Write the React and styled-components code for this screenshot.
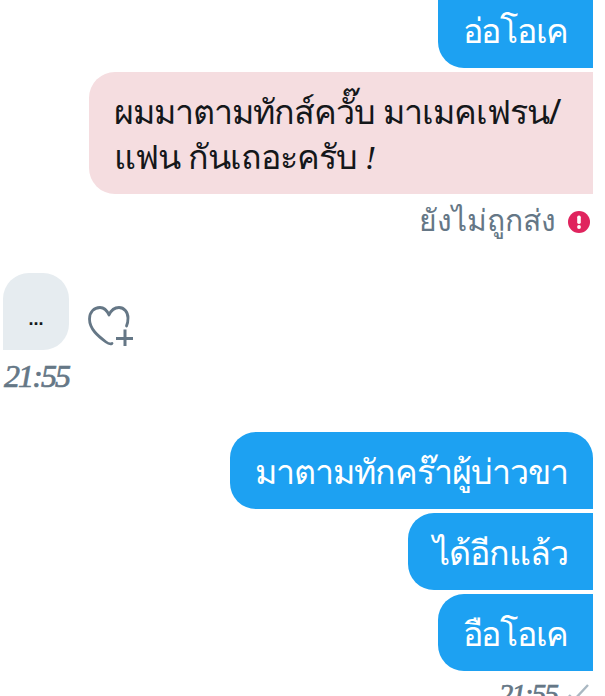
import React from 'react'
import styled, { createGlobalStyle } from 'styled-components'

const GlobalStyle = createGlobalStyle`
    html, body {
        margin: 0;
        padding: 0;
        background: #ffffff;
        height: 696px;
        overflow: hidden;
    }
`

const Chat = styled.div`
    width: 605px;
    height: 696px;
    overflow: hidden;
    box-sizing: border-box;
    padding: 0 12px 0 3px;
    font-family: "Noto Sans", Roboto, sans-serif;
    display: flex;
    flex-direction: column;
`

const Stack = styled.div`
    display: flex;
    flex-direction: column;
    align-items: flex-end;
    gap: 4px;
    margin-top: ${(p) => p.$top || 0}px;
`

const Bubble = styled.div`
    box-sizing: border-box;
    width: ${(p) => (p.$lines === 2 ? '504px' : 'auto')};
    height: ${(p) => (p.$lines === 2 ? 122 : 77)}px;
    padding: 17px 25px 15px;
    font-size: 34px;
    letter-spacing: ${(p) => (p.$tight ? -1.3 : -1)}px;
    line-height: 45px;
    white-space: pre-line;
    color: ${(p) => (p.$tone === 'blue' ? '#ffffff' : '#14171a')};
    background: ${(p) =>
        p.$tone === 'blue' ? '#1da1f2' : p.$tone === 'red' ? '#f5dde0' : '#e6ecf0'};
    border-radius: ${(p) => p.$radius || '26px'};
`

const Bang = styled.i`
    font-family: "Liberation Serif", serif;
`

const Status = styled.div`
    display: flex;
    align-items: center;
    justify-content: flex-end;
    gap: 12px;
    margin-top: 6px;
    padding-right: 3px;
    height: 39px;
    font-size: 30px;
    line-height: 39px;
    color: #657786;
`

const Alert = styled.svg`
    margin-top: 4px;
`

const Incoming = styled.div`
    display: flex;
    align-items: flex-start;
    gap: 19px;
    margin-top: 34px;
`

const Dots = styled(Bubble)`
    width: 66px;
    padding: 24px 0 0;
    text-align: center;
    font-family: "Liberation Sans", sans-serif;
    font-weight: 700;
    font-size: 18px;
    letter-spacing: 0;
    line-height: 45px;
    border-radius: 26px 26px 26px 0;
`

const Heart = styled.svg`
    margin-top: 33px;
`

const Time = styled.div`
    font-family: "Liberation Serif", serif;
    font-style: italic;
    font-weight: 400;
    font-size: ${(p) => p.$size || 32}px;
    letter-spacing: -1.9px;
    -webkit-text-stroke: 0.7px #657786;
    line-height: 40px;
    color: #657786;
    margin-top: ${(p) => p.$top || 0}px;
    margin-left: ${(p) => p.$left || 0}px;
`

const Sent = styled.div`
    display: flex;
    justify-content: flex-end;
    align-items: flex-start;
    gap: 11px;
    margin-top: 3px;
    padding-right: 3px;
`

const Tick = styled.svg`
    margin-top: 10px;
`

const App = () => {
    return (
        <>
            <GlobalStyle />
            <Chat>
                <Stack $top={-9}>
                    <Bubble $tone="blue" $tight $radius="0 0 0 26px">อ่อโอเค</Bubble>
                    <Bubble $tone="red" $lines={2} $radius="26px 0 0 26px">
                        {'ผมมาตามทักส์ควั๊บ มาเมคเฟรน/\nแฟน กันเถอะครับ '}<Bang>!</Bang>
                    </Bubble>
                </Stack>
                <Status>
                    ยังไม่ถูกส่ง
                    <Alert width="22" height="22" viewBox="0 0 22 22">
                        <circle cx="11" cy="11" r="11" fill="#e0245e" />
                        <rect x="9.2" y="4.5" width="3.6" height="8.5" rx="1.7" fill="#fff" />
                        <circle cx="11" cy="16" r="1.9" fill="#fff" />
                    </Alert>
                </Status>
                <Incoming>
                    <Dots $tone="grey">...</Dots>
                    <Heart width="46" height="42" viewBox="0 0 46 42" fill="none" stroke="#657786" strokeWidth="2.8" strokeLinecap="round" strokeLinejoin="round">
                        <path d="M24 37.5 C22 38.5 20 37.5 18 36 C10 30 1.5 23 1.5 13 C1.5 6 6 1.5 12 1.5 C16 1.5 19 4.5 21 9 C23 4.5 26 1.5 31 1.5 C36 1.5 40 6 40 12 C40 15 39.5 18 38.5 20" />
                        <path d="M37 23.5 V40 M28 32.5 H45" strokeLinecap="butt" strokeWidth="3" />
                    </Heart>
                </Incoming>
                <Time $top={6} $left={1}>21:55</Time>
                <Stack $top={36}>
                    <Bubble $tone="blue" $radius="26px 26px 0 26px">มาตามทักคร๊าผู้บ่าวขา</Bubble>
                    <Bubble $tone="blue" $radius="26px 0 0 26px">ได้อีกแล้ว</Bubble>
                    <Bubble $tone="blue" $tight $radius="26px 0 0 26px">อือโอเค</Bubble>
                </Stack>
                <Sent>
                    <Time as="span" $size={29}>21:55</Time>
                    <Tick width="22" height="20" viewBox="0 0 22 20" fill="none" stroke="#aab8c2" strokeWidth="2.4">
                        <path d="M1 11 L6 16 L20 1" />
                    </Tick>
                </Sent>
            </Chat>
        </>
    )
}

export default App
